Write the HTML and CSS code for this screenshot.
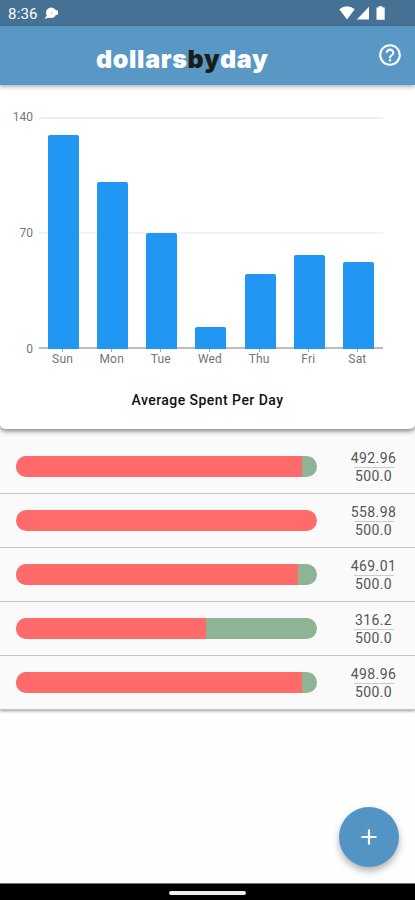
FILE: index.html
```html
<!DOCTYPE html>
<html lang="en">
<head>
    <meta charset="UTF-8">
    <title>dollarsbyday</title>
    <meta name="viewport" content="width=device-width, initial-scale=1.0">
    <link rel="stylesheet" href="styles.css">
</head>
<body>
    <div class="status-bar">
        <span class="time">8:36</span>
        <svg class="chat-icon" width="15" height="13" viewBox="0 0 15 13">
            <circle cx="7.2" cy="5.8" r="5.2" fill="#fff"/>
            <path d="M3 8L0.5 12L5.5 10.5ZM11 3L14 3.5V7.5L12 8Z" fill="#fff"/>
            <circle cx="8" cy="5.8" r="1.2" fill="#d5e0e8"/>
        </svg>
        <svg class="system-icons" width="48" height="15" viewBox="0 0 48 15">
            <path d="M0.3 3.3Q8 -2.7 15.7 3.3L8 13.5Z" fill="#fff"/>
            <path d="M17.8 13.5L30 0.8V13.5Z" fill="#fff"/>
            <path d="M37.5 1.6H39.5V0.2H43.5V1.6H45.7V13.7H37.5Z" fill="#fff"/>
        </svg>
    </div>

    <header class="app-bar">
        <h1 class="logo">dollars<span>by</span>day</h1>
        <svg class="help-icon" width="26" height="26" viewBox="0 0 24 24">
            <path fill="#fff" d="M11 18h2v-2h-2v2zm1-16C6.48 2 2 6.48 2 12s4.48 10 10 10 10-4.48 10-10S17.52 2 12 2zm0 18c-4.41 0-8-3.59-8-8s3.59-8 8-8 8 3.59 8 8-3.59 8-8 8zm0-14c-2.21 0-4 1.79-4 4h2c0-1.1.9-2 2-2s2 .9 2 2c0 2-3 1.75-3 5h2c0-2.25 3-2.5 3-5 0-2.21-1.79-4-4-4z"/>
        </svg>
    </header>

    <main>
        <section class="card">
            <div class="chart">
                <div class="y-axis">
                    <span>140</span>
                    <span>70</span>
                    <span>0</span>
                </div>
                <div class="plot">
                    <div class="bars">
                        <div class="bar" style="height: 92.4%"></div>
                        <div class="bar" style="height: 71.8%"></div>
                        <div class="bar" style="height: 50.2%"></div>
                        <div class="bar" style="height: 9.5%"></div>
                        <div class="bar" style="height: 32.4%"></div>
                        <div class="bar" style="height: 40.7%"></div>
                        <div class="bar" style="height: 37.4%"></div>
                    </div>
                    <div class="x-axis">
                        <span>Sun</span>
                        <span>Mon</span>
                        <span>Tue</span>
                        <span>Wed</span>
                        <span>Thu</span>
                        <span>Fri</span>
                        <span>Sat</span>
                    </div>
                </div>
            </div>
            <h2 class="chart-title">Average Spent Per Day</h2>
        </section>

        <section class="budgets">
            <div class="budget">
                <div class="track"><div class="spent" style="width: 95%"></div></div>
                <div class="amount"><span class="used">492.96</span><span>500.0</span></div>
            </div>
            <div class="budget">
                <div class="track"><div class="spent" style="width: 100%"></div></div>
                <div class="amount"><span class="used">558.98</span><span>500.0</span></div>
            </div>
            <div class="budget">
                <div class="track"><div class="spent" style="width: 93.8%"></div></div>
                <div class="amount"><span class="used">469.01</span><span>500.0</span></div>
            </div>
            <div class="budget">
                <div class="track"><div class="spent" style="width: 63.24%"></div></div>
                <div class="amount"><span class="used">316.2</span><span>500.0</span></div>
            </div>
            <div class="budget">
                <div class="track"><div class="spent" style="width: 95%"></div></div>
                <div class="amount"><span class="used">498.96</span><span>500.0</span></div>
            </div>
        </section>
    </main>

    <button class="add-button" aria-label="Add">
        <svg width="16" height="16" viewBox="0 0 16 16">
            <path d="M8 0.5V15.5M0.5 8H15.5" stroke="#fff" stroke-width="2.2"/>
        </svg>
    </button>

    <footer class="nav-bar">
        <div class="handle"></div>
    </footer>
</body>
</html>
```

FILE: styles.css
```css
* {
    box-sizing: border-box;
}
body {
    margin: 0;
    height: 900px;
    display: flex;
    flex-direction: column;
    overflow: hidden;
    background-color: #fefefe;
    font-family: Roboto, Arial, sans-serif;
}
.status-bar {
    height: 26px;
    padding: 0 28px 0 8px;
    display: flex;
    align-items: center;
    background-color: #457194;
    color: #fff;
}
.time {
    font-size: 15px;
    letter-spacing: 0.2px;
    padding-top: 1px;
}
.chat-icon {
    margin-left: 6px;
}
.system-icons {
    margin-left: auto;
}
.app-bar {
    height: 59px;
    flex-shrink: 0;
    padding: 0 12px 0 96px;
    display: flex;
    align-items: center;
    justify-content: space-between;
    background-color: #5998c5;
    box-shadow: 0 2px 4px rgba(0,0,0,0.3);
    z-index: 1;
}
.logo {
    margin: 7px 0 0;
    font-family: Inter, Roboto, sans-serif;
    font-size: 25px;
    font-weight: 900;
    line-height: 30px;
    letter-spacing: 0.65px;
    color: #fff;
}
.logo span {
    color: #1c1c1c;
}
.help-icon {
    margin-bottom: 1px;
}
main {
    flex: 1;
}
.card {
    height: 344px;
    padding-top: 32px;
    position: relative;
    background-color: #fff;
    border-radius: 0 0 5px 5px;
    box-shadow: 0 2px 5px rgba(0,0,0,0.5);
}
.chart {
    display: flex;
}
.y-axis {
    width: 33px;
    height: 246px;
    margin: -7px 6px 0 0;
    display: flex;
    flex-direction: column;
    justify-content: space-between;
    text-align: right;
    font-size: 12px;
    line-height: 14px;
    color: #757575;
}
.plot {
    width: 344px;
}
.bars {
    height: 232px;
    display: grid;
    grid-template-columns: repeat(7, 1fr);
    justify-items: center;
    align-items: end;
    background: linear-gradient(#efefef, #efefef) 0 0 / 100% 2px no-repeat,
                linear-gradient(#f3f3f3, #f3f3f3) 0 115px / 100% 2px no-repeat,
                linear-gradient(#bdbdbd, #bdbdbd) 0 100% / 100% 2px no-repeat;
}
.bar {
    width: 31px;
    background-color: #2196f3;
    border-radius: 2px 2px 0 0;
}
.x-axis {
    display: grid;
    grid-template-columns: repeat(7, 1fr);
    margin-left: -1px;
    margin-right: 1px;
    text-align: center;
    font-size: 12px;
    line-height: 14px;
    letter-spacing: 0.2px;
    color: #757575;
}
.x-axis span::before {
    content: "";
    display: block;
    width: 1px;
    height: 3px;
    margin: 0 auto;
    background-color: #aaa;
}
.chart-title {
    margin: 25px 0 0;
    text-align: center;
    font-size: 14px;
    font-weight: 500;
    line-height: 18px;
    letter-spacing: 0.45px;
    color: #111;
}
.budgets {
    background-color: #fafafa;
    padding-top: 11px;
    box-shadow: 0 1px 3px rgba(0,0,0,0.4);
}
.budget {
    height: 54px;
    padding: 0 16px;
    display: flex;
    align-items: center;
    justify-content: space-between;
    border-bottom: 1px solid #c4c4c4;
}
.track {
    width: 301px;
    height: 21px;
    background-color: #8fb395;
    border-radius: 11px;
    overflow: hidden;
}
.spent {
    height: 100%;
    background-color: #ff6b6b;
}
.amount {
    width: 51px;
    padding-top: 2px;
    display: flex;
    flex-direction: column;
    align-items: center;
    text-align: center;
    font-size: 14px;
    line-height: 17px;
    letter-spacing: 0.4px;
    color: #555;
}
.used::after {
    content: "";
    display: block;
    width: 40px;
    height: 1px;
    margin: 0 auto;
    background-color: #ccc;
}
.add-button {
    position: absolute;
    left: 339px;
    top: 807px;
    width: 60px;
    height: 60px;
    padding: 0;
    display: flex;
    align-items: center;
    justify-content: center;
    border: none;
    border-radius: 50%;
    background-color: #5294c4;
    box-shadow: 0 4px 7px rgba(0,0,0,0.3);
}
.nav-bar {
    height: 17px;
    display: flex;
    justify-content: center;
    background-color: #000;
    border-top: 1px solid #777;
}
.handle {
    width: 77px;
    height: 4px;
    margin-top: 7px;
    border-radius: 2px;
    background-color: #eee;
}
```
